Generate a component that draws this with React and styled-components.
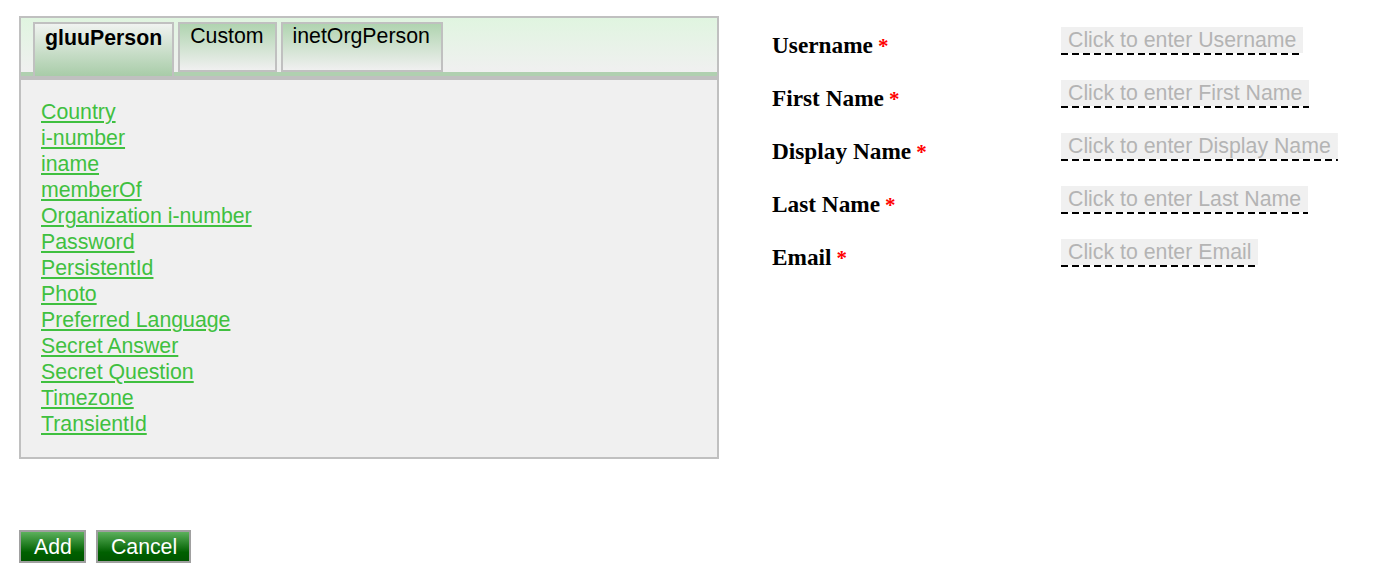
import React, { useState } from "react";
import styled, { createGlobalStyle } from "styled-components";

const GlobalStyle = createGlobalStyle`
  body {
    margin: 0;
    background: #ffffff;
    font-family: "Liberation Sans", Arial, sans-serif;
  }
`;

const tabs = ["gluuPerson", "Custom", "inetOrgPerson"];

const attributes = [
  "Country",
  "i-number",
  "iname",
  "memberOf",
  "Organization i-number",
  "Password",
  "PersistentId",
  "Photo",
  "Preferred Language",
  "Secret Answer",
  "Secret Question",
  "Timezone",
  "TransientId",
];

const fields = ["Username", "First Name", "Display Name", "Last Name", "Email"];

export default function App() {
  const [active, setActive] = useState(0);

  return (
    <Page>
      <GlobalStyle />
      <Top>
        <Panel>
          <TabBar>
            {tabs.map((name, i) => (
              <Tab key={name} $active={i === active} onClick={() => setActive(i)}>
                {name}
              </Tab>
            ))}
          </TabBar>
          <TabBody>
            {attributes.map((a) => (
              <AttrLink key={a} href="#">{a}</AttrLink>
            ))}
          </TabBody>
        </Panel>
        <Form>
          {fields.map((f) => (
            <Row key={f}>
              <Label>
                {f}<Star>*</Star>
              </Label>
              <Field>Click to enter {f}</Field>
            </Row>
          ))}
        </Form>
      </Top>
      <Buttons>
        <Button>Add</Button>
        <Button>Cancel</Button>
      </Buttons>
    </Page>
  );
}

const Page = styled.div`
  padding: 16px 0 0 19px;
`;

const Top = styled.div`
  display: flex;
  align-items: flex-start;
  gap: 53px;
`;

const Panel = styled.div`
  width: 696px;
  border: 2px solid #c0c0c0;
  background: #f0f0f0;
`;

const TabBar = styled.div`
  display: flex;
  align-items: flex-end;
  gap: 4px;
  height: 54px;
  padding-left: 12px;
  background: linear-gradient(#e0f5e0, #f0f0f0);
  border-bottom: 4px solid #b0d0b0;
  box-shadow: 0 4px 0 #c0c0c0;
  margin-bottom: 4px;
`;

const Tab = styled.div`
  box-sizing: border-box;
  height: ${(p) => (p.$active ? "54px" : "50px")};
  margin-bottom: ${(p) => (p.$active ? "-4px" : "0")};
  align-self: flex-start;
  margin-top: 4px;
  padding: ${(p) => (p.$active ? "2px 10px 0" : "0 11px 0 10px")};
  border: 2px solid #c0c0c0;
  border-bottom: ${(p) => (p.$active ? "none" : "2px solid #c0c0c0")};
  background: ${(p) =>
    p.$active
      ? "linear-gradient(#f0f3f0, #a8cca8)"
      : "linear-gradient(#b0d4b0, #f0f0f0)"};
  font-size: 21.3px;
  font-weight: ${(p) => (p.$active ? 700 : 400)};
  color: #000;
  line-height: 24px;
  cursor: pointer;
`;

const TabBody = styled.div`
  display: flex;
  flex-direction: column;
  align-items: flex-start;
  padding: 19px 20px 20px;
`;

const AttrLink = styled.a`
  font-size: 21.3px;
  line-height: 26px;
  color: #40c040;
  text-decoration: underline;
  text-underline-offset: 2px;
  text-decoration-thickness: 2px;
`;

const Form = styled.div`
  display: flex;
  flex-direction: column;
  padding-top: 3px;
`;

const Row = styled.div`
  display: flex;
  align-items: flex-start;
  height: 53px;
`;

const Label = styled.div`
  width: 289px;
  margin-top: 13px;
  font-family: "Liberation Serif", "Times New Roman", serif;
  font-size: 23.3px;
  font-weight: 700;
  line-height: 26px;
  color: #000;
`;

const Star = styled.span`
  color: #ff0000;
  margin-left: 5px;
  font-size: 21px;
`;

const Field = styled.div`
  margin-top: 8px;
  padding: 0 7px 2px;
  background:
    repeating-linear-gradient(90deg, #000 0 7px, transparent 7px 11px) bottom / 100% 2px no-repeat,
    linear-gradient(#f0f0f0, #f0f0f0) top / 100% 26px no-repeat;
  color: #b4b4b4;
  font-size: 21.3px;
  line-height: 26px;
  cursor: pointer;
`;

const Buttons = styled.div`
  display: flex;
  gap: 10px;
  margin-top: 71px;
`;

const Button = styled.button`
  height: 33px;
  padding: 0 12px 0 13px;
  border: 2px solid #a0a0a0;
  background: linear-gradient(#5cb05c, #006000 70%, #005500);
  color: #ffffff;
  font-family: "Liberation Sans", Arial, sans-serif;
  font-size: 21.3px;
  line-height: 26px;
  cursor: pointer;
`;
